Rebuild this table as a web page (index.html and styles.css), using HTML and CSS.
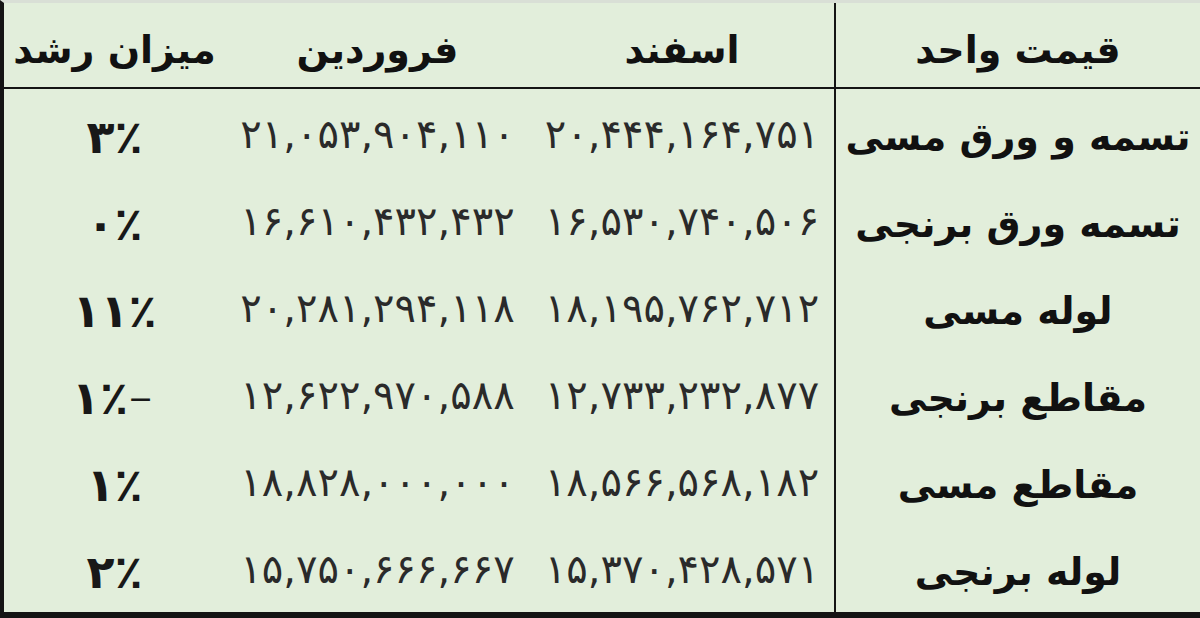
FILE: index.html
```html
<!DOCTYPE html>
<html lang="fa" dir="rtl">
<head>
<meta charset="utf-8">
<title>قیمت واحد</title>
<link rel="stylesheet" href="styles.css">
</head>
<body>
<div class="sheet">
  <div class="grid">
    <div class="cell head label">قیمت واحد</div>
    <div class="cell head">اسفند</div>
    <div class="cell head">فروردین</div>
    <div class="cell head">میزان رشد</div>

    <div class="cell label">تسمه و ورق مسی</div>
    <div class="cell num">۲۰,۴۴۴,۱۶۴,۷۵۱</div>
    <div class="cell num">۲۱,۰۵۳,۹۰۴,۱۱۰</div>
    <div class="cell pct">۳٪</div>

    <div class="cell label">تسمه ورق برنجی</div>
    <div class="cell num">۱۶,۵۳۰,۷۴۰,۵۰۶</div>
    <div class="cell num">۱۶,۶۱۰,۴۳۲,۴۳۲</div>
    <div class="cell pct">۰٪</div>

    <div class="cell label">لوله مسی</div>
    <div class="cell num">۱۸,۱۹۵,۷۶۲,۷۱۲</div>
    <div class="cell num">۲۰,۲۸۱,۲۹۴,۱۱۸</div>
    <div class="cell pct">۱۱٪</div>

    <div class="cell label">مقاطع برنجی</div>
    <div class="cell num">۱۲,۷۳۳,۲۳۲,۸۷۷</div>
    <div class="cell num">۱۲,۶۲۲,۹۷۰,۵۸۸</div>
    <div class="cell pct"><span class="minus">−</span>۱٪</div>

    <div class="cell label">مقاطع مسی</div>
    <div class="cell num">۱۸,۵۶۶,۵۶۸,۱۸۲</div>
    <div class="cell num">۱۸,۸۲۸,۰۰۰,۰۰۰</div>
    <div class="cell pct">۱٪</div>

    <div class="cell label">لوله برنجی</div>
    <div class="cell num">۱۵,۳۷۰,۴۲۸,۵۷۱</div>
    <div class="cell num">۱۵,۷۵۰,۶۶۶,۶۶۷</div>
    <div class="cell pct">۲٪</div>
  </div>
</div>
</body>
</html>
```

FILE: styles.css
```css
html, body {
  margin: 0;
  padding: 0;
  background: #e2eedb;
}
.sheet {
  width: 1200px;
  height: 618px;
  box-sizing: border-box;
  border-top: 3px solid #d9dfd6;
  border-left: 4px solid #141414;
  border-bottom: 6px solid #141414;
  background: #e2eedb;
  font-family: "DejaVu Sans", sans-serif;
  color: #1b1b1b;
}
.grid {
  display: grid;
  grid-template-columns: 366px 304px 305px 1fr;
  grid-template-rows: 86px repeat(6, 1fr);
  height: 100%;
}
.cell {
  display: flex;
  align-items: center;
  justify-content: center;
  white-space: nowrap;
  padding-top: 8px;
}
.head {
  border-bottom: 2px solid #141414;
  font-weight: bold;
  font-size: 38px;
  color: #111;
  padding-top: 10px;
}
.label {
  border-left: 2px solid #141414;
  font-weight: bold;
  font-size: 38px;
  color: #111;
}
.num {
  font-size: 40px;
  letter-spacing: 3.5px;
  color: #2a2a2a;
  padding-top: 2px;
}
.pct {
  font-size: 46px;
  font-weight: bold;
  color: #181818;
}
.minus {
  font-size: 30px;
  font-weight: normal;
  margin-right: 4px;
}
```
